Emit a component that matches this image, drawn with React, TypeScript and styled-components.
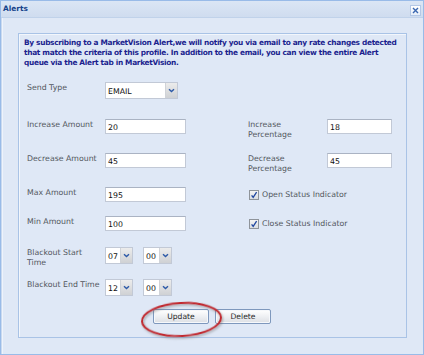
import React from "react";
import styled, { createGlobalStyle } from "styled-components";

const Global = createGlobalStyle`
  html, body { margin: 0; padding: 0; background: #dfe8f6; }
  body { width: 424px; height: 355px; overflow: hidden; font-family: "DejaVu Sans", Verdana, sans-serif; }
  * { box-sizing: border-box; }
`;

const Window = styled.div`
  width: 424px;
  height: 355px;
  border: 1px solid #99bbe8;
  background: #dfe8f6;
  display: flex;
  flex-direction: column;
  box-shadow: inset 1px 0 0 #c9d9ef, inset 2px 0 0 #eef3fb;
`;

const Header = styled.div`
  height: 17px;
  flex: none;
  display: flex;
  align-items: center;
  justify-content: space-between;
  padding: 0 2px 0 2px;
  background: linear-gradient(#dbe6f5, #cfdcef);
  border-bottom: 1px solid #c0d2ea;
`;

const Title = styled.span`
  font-size: 7.4px;
  font-weight: bold;
  color: #15428b;
  line-height: 10px;
`;

const CloseBtn = styled.div`
  width: 11px;
  height: 11px;
  margin-top: 2px;
  border: 1px solid #b4c8e6;
  background: linear-gradient(#ffffff, #e6eef9);
  display: flex;
  align-items: center;
  justify-content: center;
`;

const Body = styled.div`
  flex: 1;
  padding: 15px 16px 0 17px;
`;

const Panel = styled.div`
  height: 305px;
  border: 1px solid #a9c3e6;
  box-shadow: inset 1px 1px 0 #f2f6fc;
  background: #dfe8f6;
  display: flex;
  flex-direction: column;
`;

const Intro = styled.p`
  margin: 4px 0 0 5px;
  font-size: 7.4px;
  font-weight: bold;
  line-height: 9.8px;
  color: #1b1f8e;
  letter-spacing: -0.31px;
  white-space: nowrap;
`;

const Form = styled.div`
  margin: 15px 0 0 8px;
  display: grid;
  grid-template-columns: 78px 143px 79px 65px;
  grid-template-rows: 37px 34px 34px 29px 31px 32px 30px;
  align-items: start;
`;

const Label = styled.div`
  font-size: 7.8px;
  line-height: 9.5px;
  color: #52575d;
  padding-top: 1px;
`;

const TextInput = styled.div<{ $w: number }>`
  width: ${(p) => p.$w}px;
  height: 15px;
  background: #fff;
  border: 1px solid #c2c9d6;
  border-top-color: #aab3c3;
  font-size: 7.8px;
  color: #111;
  padding: 1px 0 0 2px;
  display: flex;
  align-items: center;
`;

const Combo = styled.div<{ $w: number }>`
  width: ${(p) => p.$w}px;
  height: 17px;
  display: flex;
  border: 1px solid #c2c9d6;
  background: #fff;
`;

const ComboText = styled.div`
  flex: 1;
  font-size: 7.8px;
  color: #111;
  padding: 1px 0 0 2px;
  display: flex;
  align-items: center;
`;

const Trigger = styled.div`
  width: 12px;
  flex: none;
  background: linear-gradient(#ececec, #cfd1d4);
  border-left: 1px solid #d0d3d8;
  display: flex;
  align-items: center;
  justify-content: center;
`;

const TimeGroup = styled.div`
  display: flex;
  gap: 10px;
`;

const CheckRow = styled.div`
  grid-column: 3 / span 2;
  display: flex;
  align-items: center;
  gap: 3px;
  padding: 3px 0 0 1px;
`;

const Box = styled.div`
  width: 10px;
  height: 10px;
  border: 1px solid #8f949a;
  background: linear-gradient(#f4f4f4, #d9dde2);
  display: flex;
  align-items: center;
  justify-content: center;
`;

const CheckLabel = styled.span`
  font-size: 7.8px;
  color: #52575d;
  line-height: 10px;
`;

const Buttons = styled.div`
  display: flex;
  justify-content: center;
  gap: 6px;
  padding-right: 1px;
`;

const ButtonWrap = styled.div`
  position: relative;
`;

const Button = styled.div`
  width: 56px;
  height: 15px;
  border: 1px solid #7e98bd;
  border-radius: 2px;
  background: linear-gradient(#ffffff 0%, #eef0f3 50%, #dcdfe4 100%);
  font-size: 7.6px;
  color: #2b2b2b;
  display: flex;
  align-items: center;
  justify-content: center;
  box-shadow: inset 0 0 0 1px #f6f8fb;
`;

const Ring = styled.svg`
  position: absolute;
  left: -12px;
  top: -8px;
  width: 82px;
  height: 36px;
  overflow: visible;
  pointer-events: none;
`;

const Chevron = () => (
  <svg width="7" height="5" viewBox="0 0 7 5">
    <path d="M1 1.2 L3.5 3.6 L6 1.2" fill="none" stroke="#2d5aa8" strokeWidth="1.4" />
  </svg>
);

const Check = () => (
  <svg width="8" height="8" viewBox="0 0 8 8">
    <path d="M1.6 4.3 L3.2 6.4 L6.6 1.2" fill="none" stroke="#2047a0" strokeWidth="1.3" />
  </svg>
);

const Select = ({ value, w }: { value: string; w: number }) => (
  <Combo $w={w}>
    <ComboText>{value}</ComboText>
    <Trigger>
      <Chevron />
    </Trigger>
  </Combo>
);

const CheckItem = ({ label }: { label: string }) => (
  <CheckRow>
    <Box>
      <Check />
    </Box>
    <CheckLabel>{label}</CheckLabel>
  </CheckRow>
);

export default function App() {
  return (
    <>
      <Global />
      <Window>
        <Header>
          <Title>Alerts</Title>
          <CloseBtn>
            <svg width="7" height="7" viewBox="0 0 7 7">
              <path d="M1 1 L6 6 M6 1 L1 6" stroke="#3a67b0" strokeWidth="1.4" />
            </svg>
          </CloseBtn>
        </Header>
        <Body>
          <Panel>
            <Intro>
              By subscribing to a MarketVision Alert,we will notify you via email to any rate changes detected
              <br />
              that match the criteria of this profile. In addition to the email, you can view the entire Alert
              <br />
              queue via the Alert tab in MarketVision.
            </Intro>
            <Form>
              <Label>Send Type</Label>
              <Select value="EMAIL" w={73} />
              <div />
              <div />

              <Label>Increase Amount</Label>
              <TextInput $w={81}>20</TextInput>
              <Label>
                Increase
                <br />
                Percentage
              </Label>
              <TextInput $w={65}>18</TextInput>

              <Label>Decrease Amount</Label>
              <TextInput $w={81}>45</TextInput>
              <Label>
                Decrease
                <br />
                Percentage
              </Label>
              <TextInput $w={65}>45</TextInput>

              <Label>Max Amount</Label>
              <TextInput $w={81}>195</TextInput>
              <CheckItem label="Open Status Indicator" />

              <Label>Min Amount</Label>
              <TextInput $w={81}>100</TextInput>
              <CheckItem label="Close Status Indicator" />

              <Label>
                Blackout Start
                <br />
                Time
              </Label>
              <TimeGroup>
                <Select value="07" w={28} />
                <Select value="00" w={29} />
              </TimeGroup>
              <div />
              <div />

              <Label>Blackout End Time</Label>
              <TimeGroup>
                <Select value="12" w={28} />
                <Select value="00" w={29} />
              </TimeGroup>
              <div />
              <div />
            </Form>
            <Buttons>
              <ButtonWrap>
                <Button>Update</Button>
                <Ring viewBox="0 0 82 36">
                  <defs>
                    <filter id="sh" x="-20%" y="-30%" width="140%" height="160%">
                      <feDropShadow dx="1" dy="1.5" stdDeviation="1" floodColor="#6b6b6b" floodOpacity="0.55" />
                    </filter>
                  </defs>
                  <ellipse
                    cx="40.5"
                    cy="18.5"
                    rx="39.5"
                    ry="16.5"
                    fill="none"
                    stroke="#c1272d"
                    strokeWidth="2"
                    filter="url(#sh)"
                    transform="rotate(-3 40.5 18.5)"
                  />
                </Ring>
              </ButtonWrap>
              <Button>Delete</Button>
            </Buttons>
          </Panel>
        </Body>
      </Window>
    </>
  );
}
